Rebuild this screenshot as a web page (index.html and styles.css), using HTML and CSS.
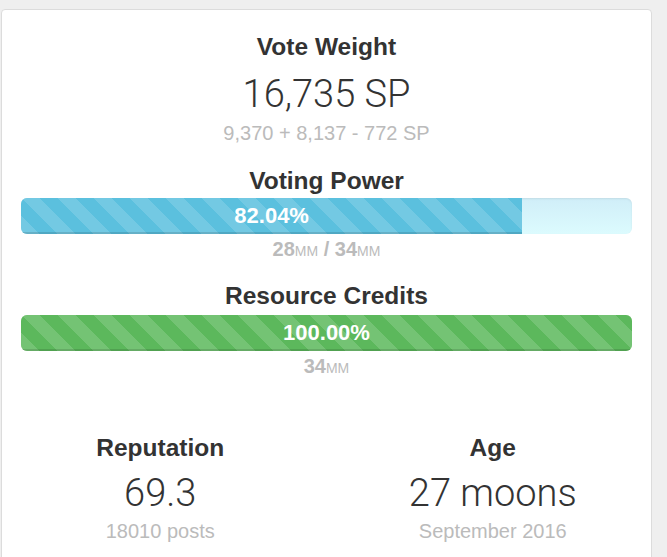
FILE: index.html
```html
<!DOCTYPE html>
<html>
<head>
<meta charset="utf-8">
<link rel="stylesheet" href="styles.css">
</head>
<body>
<div class="card">
  <div class="title t-vote">Vote Weight</div>
  <div class="big">16,735 SP</div>
  <div class="sub">9,370 + 8,137 - 772 SP</div>

  <div class="title t-power">Voting Power</div>
  <div class="progress blue-track">
    <div class="bar bar-blue" style="width: 82.04%">82.04%</div>
  </div>
  <div class="meta">28<span class="unit">MM</span> / 34<span class="unit">MM</span></div>

  <div class="title t-rc">Resource Credits</div>
  <div class="progress green-track">
    <div class="bar bar-green" style="width: 100%">100.00%</div>
  </div>
  <div class="meta">34<span class="unit">MM</span></div>

  <div class="cols">
    <div class="col">
      <div class="title">Reputation</div>
      <div class="big big-sm">69.3</div>
      <div class="sub">18010 posts</div>
    </div>
    <div class="col">
      <div class="title">Age</div>
      <div class="big big-sm">27 moons</div>
      <div class="sub">September 2016</div>
    </div>
  </div>
</div>
</body>
</html>
```
FILE: styles.css
```css
html, body {
  margin: 0;
  padding: 0;
}
body {
  background: #efefef;
  font-family: "Liberation Sans", Arial, sans-serif;
  color: #333;
  width: 667px;
  height: 557px;
  overflow: hidden;
}
.card {
  margin: 9px 0 0 1px;
  width: 651px;
  box-sizing: border-box;
  height: 600px;
  background: #fff;
  border: 1px solid #dcdcdc;
  border-radius: 4px;
  padding: 23px 19px 0 19px;
  text-align: center;
}
.title {
  font-size: 24.5px;
  line-height: 28px;
  font-weight: bold;
  color: #333;
}
.big {
  font-family: Roboto, "Liberation Sans", sans-serif;
  font-weight: 300;
  font-size: 38px;
  line-height: 40px;
  margin-top: 13px;
  color: #333;
}
.sub {
  font-size: 20px;
  line-height: 20px;
  color: #bbb;
  margin-top: 9px;
}
.t-power {
  margin-top: 24px;
}
.t-rc {
  margin-top: 24px;
}
.progress {
  height: 36px;
  border-radius: 6px;
  overflow: hidden;
  display: flex;
  margin-top: 3px;
  box-shadow: inset 0 1px 2px rgba(0, 0, 0, 0.08);
}
.t-rc + .progress {
  margin-top: 5px;
}
.blue-track {
  background: linear-gradient(to bottom, #d0eef8, #dcfbfe);
}
.green-track {
  background: #dff0d8;
}
.bar {
  height: 100%;
  color: #fff;
  font-weight: bold;
  font-size: 22px;
  line-height: 36px;
  text-align: center;
  box-shadow: inset 0 -2px 0 rgba(0, 0, 0, 0.12);
  background-image: linear-gradient(45deg,
    rgba(255, 255, 255, 0.15) 25%, transparent 25%,
    transparent 50%, rgba(255, 255, 255, 0.15) 50%,
    rgba(255, 255, 255, 0.15) 75%, transparent 75%, transparent);
  background-size: 36px 36px;
}
.bar-blue {
  background-color: #5bc0de;
}
.bar-green {
  background-color: #5cb85c;
}
.meta {
  font-size: 20px;
  line-height: 18px;
  height: 18px;
  font-weight: bold;
  color: #bbb;
  margin-top: 6px;
}
.unit {
  font-size: 14px;
  line-height: 1;
  font-weight: normal;
}
.cols {
  display: grid;
  grid-template-columns: 1fr 1fr;
  margin: 59px -27px 0 -27px;
}
.big-sm {
  margin-top: 11px;
}
.col .sub {
  margin-top: 8px;
}
```
